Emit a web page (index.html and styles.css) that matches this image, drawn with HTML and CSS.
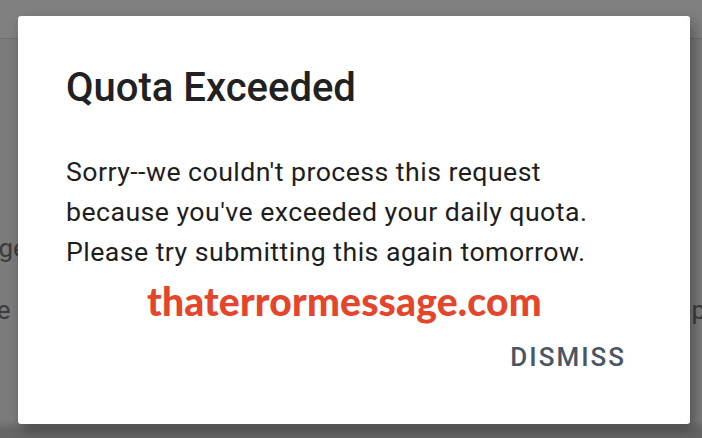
FILE: index.html
```html
<!DOCTYPE html>
<html lang="en">
<head>
  <meta charset="UTF-8">
  <meta name="viewport" content="width=device-width, initial-scale=1.0">
  <title>Quota Exceeded</title>
  <link rel="stylesheet" href="styles.css">
</head>
<body>
  <div class="page">
    <div class="top-bar"></div>
    <div class="page-body">
      <div class="page-line first"><span class="cut-left">Page</span></div>
      <div class="page-line second">
        <span class="cut-left">Line</span>
        <span class="cut-right">op</span>
      </div>
    </div>
  </div>

  <div class="overlay">
    <div class="dialog">
      <h1 class="dialog-title">Quota Exceeded</h1>
      <p class="dialog-text">Sorry--we couldn't process this request because you've exceeded your daily quota. Please try submitting this again tomorrow.</p>
      <div class="watermark">thaterrormessage.com</div>
      <div class="dialog-actions">
        <button class="dismiss-btn">DISMISS</button>
      </div>
    </div>
  </div>
</body>
</html>
```

FILE: styles.css
```css
* {
  box-sizing: border-box;
}
body {
  margin: 0;
  width: 702px;
  height: 438px;
  overflow: hidden;
  background: #7a7a7a;
  font-family: Roboto, "Noto Sans", sans-serif;
  position: relative;
}
.page {
  height: 100%;
  background: linear-gradient(to bottom, #7b7b7b 0, #7b7b7b 420px, #666 430px);
}
.top-bar {
  height: 39px;
  background: #808080;
  border-bottom: 1px solid #6e6e6e;
}
.page-body {
  padding-top: 193px;
  color: #3c3c3c;
  font-size: 26px;
}
.page-line {
  display: flex;
  justify-content: space-between;
  height: 32px;
  line-height: 32px;
}
.page-line.second {
  margin-top: 30px;
}
.page-line.first .cut-left {
  margin-left: -32px;
}
.page-line.second .cut-left {
  margin-left: -38px;
}
.cut-right {
  margin-right: -4px;
}
.overlay {
  position: absolute;
  inset: 0;
  padding: 16px 12px 14px 18px;
}
.dialog {
  width: 672px;
  height: 408px;
  background: #fff;
  border-radius: 3px;
  box-shadow: 4px 6px 14px rgba(0, 0, 0, 0.35);
  padding: 48px 48px 0 48px;
  display: flex;
  flex-direction: column;
}
.dialog-title {
  margin: 0;
  font-size: 40px;
  font-weight: 500;
  line-height: 48px;
  color: #212121;
}
.dialog-text {
  margin: 40px 0 0;
  font-size: 26.7px;
  line-height: 40px;
  letter-spacing: 0.45px;
  color: #1e1e1e;
  width: 570px;
}
.watermark {
  margin-top: 6px;
  margin-left: 81px;
  font-family: Lato, "Open Sans", sans-serif;
  font-weight: 900;
  font-size: 39px;
  line-height: 46px;
  color: #e5452b;
  letter-spacing: 0.2px;
}
.dialog-actions {
  display: flex;
  justify-content: flex-end;
  margin-top: 18px;
  margin-right: 16px;
}
.dismiss-btn {
  border: none;
  background: none;
  padding: 0;
  font-family: Roboto, sans-serif;
  font-weight: 500;
  font-size: 26px;
  line-height: 30px;
  letter-spacing: 2px;
  color: #4a5663;
  cursor: pointer;
}
```
